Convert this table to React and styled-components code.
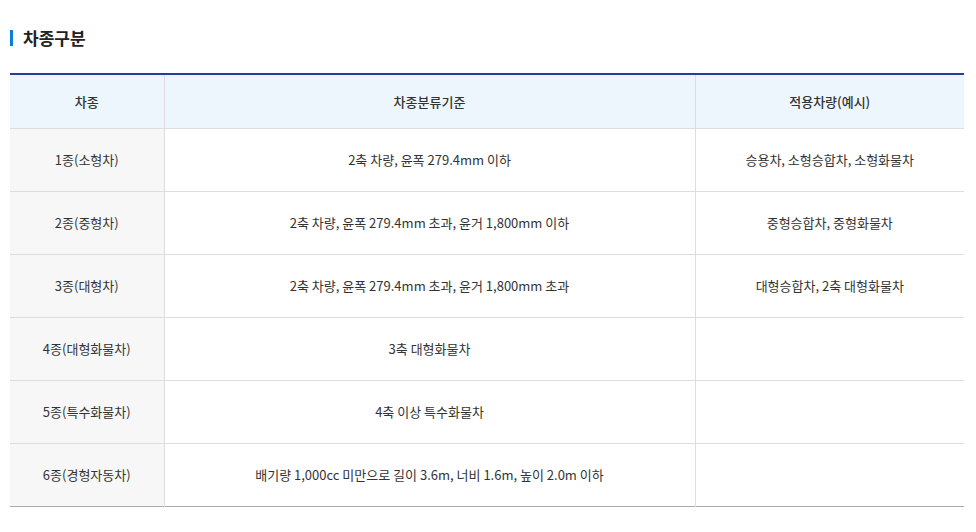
import React from 'react';
import styled, { createGlobalStyle } from 'styled-components';

const Global = createGlobalStyle`
   body {
      margin:0;
      background:#fff;
      font-family:"Noto Sans CJK KR", "Noto Sans", sans-serif;
      color:#333;
   }
`

/***** Component style *****/
const Section = styled.section`
   padding:26px 12px 0 10px;
`
const Title = styled.h3`
   display:flex;
   align-items:center;
   gap:10px;
   margin:0 0 23px 0;
   font-size:17px;
   font-weight:700;
   color:#222;
   line-height:24px;
   &::before{
      content:'';
      width:3px;
      height:16px;
      background:#0a7ee0;
   }
`
const Table = styled.table`
   width:954px;
   border-collapse:collapse;
   table-layout:fixed;
   border-top:2px solid #21409a;
   border-bottom:1px solid #aaa;
   font-size:13px;
   line-height:18px;
`
const Th = styled.th`
   height:53px;
   padding:0;
   background:#eef6fd;
   font-weight:500;
   color:#333;
   border-left:1px solid #ddd;
   &:first-child{ border-left:0; }
`
const Td = styled.td`
   height:62px;
   padding:0;
   text-align:center;
   border-top:1px solid #ddd;
   border-left:1px solid #ddd;
   color:#333;
   background:${props => props.$head ? '#f7f7f7' : '#fff'};
   &:first-child{ border-left:0; }
`
/****** ******************** *****/

const rows = [
   ['1종(소형차)', '2축 차량, 윤폭 279.4mm 이하', '승용차, 소형승합차, 소형화물차'],
   ['2종(중형차)', '2축 차량, 윤폭 279.4mm 초과, 윤거 1,800mm 이하', '중형승합차, 중형화물차'],
   ['3종(대형차)', '2축 차량, 윤폭 279.4mm 초과, 윤거 1,800mm 초과', '대형승합차, 2축 대형화물차'],
   ['4종(대형화물차)', '3축 대형화물차', ''],
   ['5종(특수화물차)', '4축 이상 특수화물차', ''],
   ['6종(경형자동차)', '배기량 1,000cc 미만으로 길이 3.6m, 너비 1.6m, 높이 2.0m 이하', ''],
]

export default function App() {
   return (
      <Section>
         <Global />
         <Title>차종구분</Title>
         <Table>
            <colgroup>
               <col style={{ width: 154 }} />
               <col style={{ width: 531 }} />
               <col style={{ width: 269 }} />
            </colgroup>
            <thead>
               <tr>
                  <Th>차종</Th>
                  <Th>차종분류기준</Th>
                  <Th>적용차량(예시)</Th>
               </tr>
            </thead>
            <tbody>
               {rows.map((r, i) => (
                  <tr key={i}>
                     <Td $head>{r[0]}</Td>
                     <Td>{r[1]}</Td>
                     <Td>{r[2]}</Td>
                  </tr>
               ))}
            </tbody>
         </Table>
      </Section>
   )
}
